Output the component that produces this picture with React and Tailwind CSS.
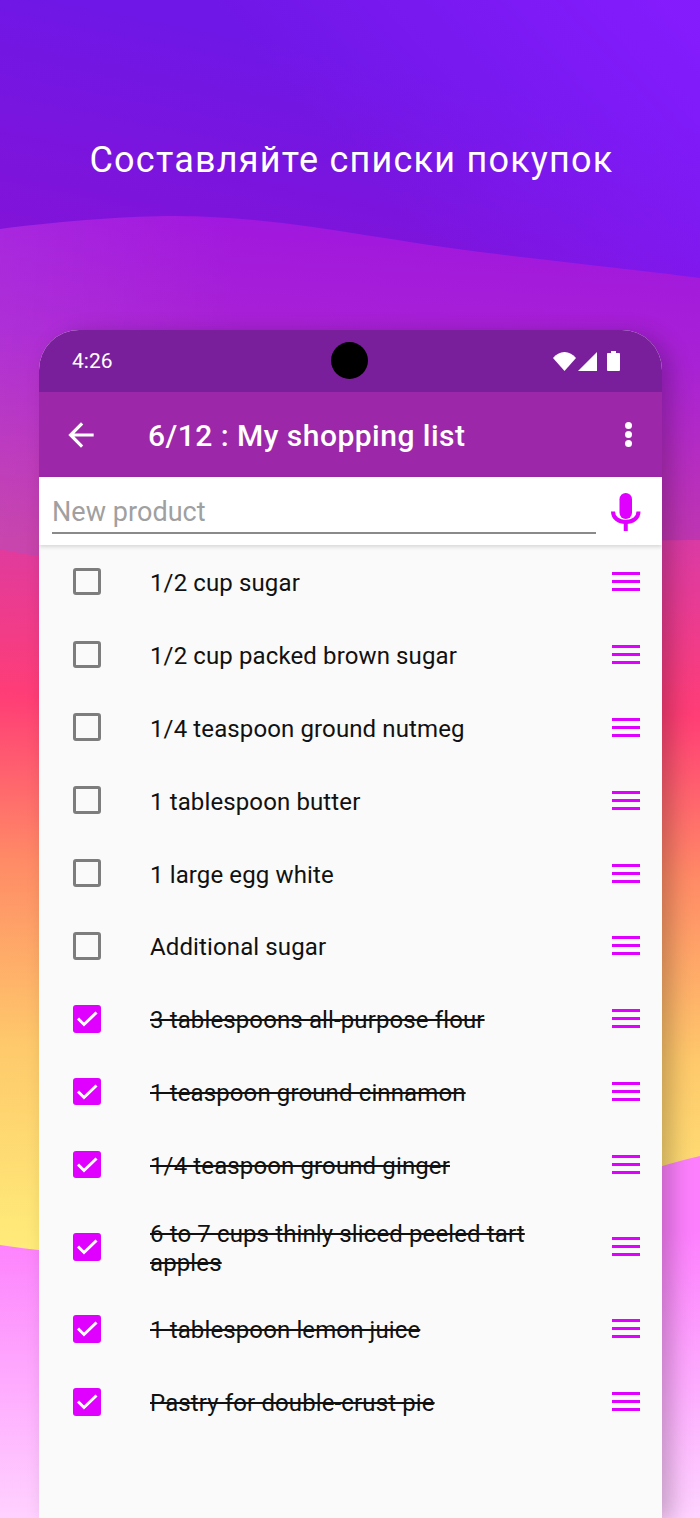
const ITEMS = [
  { label: '1/2 cup sugar', done: false },
  { label: '1/2 cup packed brown sugar', done: false },
  { label: '1/4 teaspoon ground nutmeg', done: false },
  { label: '1 tablespoon butter', done: false },
  { label: '1 large egg white', done: false },
  { label: 'Additional sugar', done: false },
  { label: '3 tablespoons all-purpose flour', done: true },
  { label: '1 teaspoon ground cinnamon', done: true },
  { label: '1/4 teaspoon ground ginger', done: true },
  { label: '6 to 7 cups thinly sliced peeled tart apples', done: true, tall: true },
  { label: '1 tablespoon lemon juice', done: true },
  { label: 'Pastry for double-crust pie', done: true },
];

function Backdrop() {
  return (
    <svg className="absolute inset-0" width="700" height="1518" viewBox="0 0 700 1518">
      <defs>
        <linearGradient id="top" gradientUnits="userSpaceOnUse" x1="60" y1="0" x2="0" y2="300">
          <stop offset="0" stopColor="#6f17e6" />
          <stop offset="1" stopColor="#8812d4" />
        </linearGradient>
        <linearGradient id="topRight" gradientUnits="userSpaceOnUse" x1="700" y1="40" x2="450" y2="270">
          <stop offset="0" stopColor="#861cff" stopOpacity="0.9" />
          <stop offset="1" stopColor="#861cff" stopOpacity="0" />
        </linearGradient>
        <linearGradient id="mid" gradientUnits="userSpaceOnUse" x1="400" y1="210" x2="380" y2="560">
          <stop offset="0" stopColor="#a016e0" />
          <stop offset="0.4" stopColor="#a922d4" />
          <stop offset="1" stopColor="#c43aa8" />
        </linearGradient>
        <linearGradient id="midLeft" gradientUnits="userSpaceOnUse" x1="0" y1="0" x2="240" y2="0">
          <stop offset="0" stopColor="#ffffff" stopOpacity="0.06" />
          <stop offset="1" stopColor="#ffffff" stopOpacity="0" />
        </linearGradient>
        <linearGradient id="warm" gradientUnits="userSpaceOnUse" x1="360" y1="520" x2="340" y2="1260">
          <stop offset="0" stopColor="#d83aa8" />
          <stop offset="0.25" stopColor="#ff3d76" />
          <stop offset="0.47" stopColor="#ff8a66" />
          <stop offset="0.72" stopColor="#fec96b" />
          <stop offset="1" stopColor="#ffec7a" />
        </linearGradient>
        <linearGradient id="pink" gradientUnits="userSpaceOnUse" x1="350" y1="1160" x2="350" y2="1518">
          <stop offset="0.2" stopColor="#fd7ffd" />
          <stop offset="1" stopColor="#ffd2ff" />
        </linearGradient>
      </defs>
      <rect width="700" height="1518" fill="url(#top)" />
      <rect width="700" height="300" fill="url(#topRight)" />
      <path d="M0 229 C70 220 130 216 175 216 C280 216 380 240 480 252 C560 262 640 270 700 278 L700 560 L0 560 Z" fill="url(#mid)" />
      <path d="M0 229 C70 220 130 216 175 216 L240 222 L240 560 L0 560 Z" fill="url(#midLeft)" />
      <path d="M0 549 C60 562 140 570 300 560 C460 550 600 540 700 540 L700 1300 L0 1300 Z" fill="url(#warm)" />
      <path d="M0 1245 C120 1262 250 1270 400 1240 C520 1215 620 1175 700 1156 L700 1518 L0 1518 Z" fill="url(#pink)" />
    </svg>
  );
}

function Checkbox({ checked }) {
  if (checked) {
    return (
      <div className="w-[27.5px] h-[27.5px] shrink-0 rounded-[3px] bg-[#df00ff]">
        <svg width="27.5" height="27.5" viewBox="0 0 27.5 27.5" fill="none">
          <path d="M5 13.5l6 6L23.5 7.5" stroke="#fff" strokeWidth="3" />
        </svg>
      </div>
    );
  }
  return <div className="w-[27.5px] h-[27.5px] shrink-0 rounded-[3px] border-[3px] border-[#7d7d7d]" />;
}

function DragHandle() {
  return (
    <div className="w-7 shrink-0 flex flex-col gap-[5px]">
      <div className="h-[3px] bg-[#df00ff]" />
      <div className="h-[3px] bg-[#df00ff]" />
      <div className="h-[3px] bg-[#df00ff]" />
    </div>
  );
}

export default function App() {
  return (
    <div className="relative w-[700px] h-[1518px] overflow-hidden" style={{ fontFamily: 'Roboto, sans-serif' }}>
      <Backdrop />

      <div className="relative flex flex-col h-full">
        <h1 className="mt-[138px] h-[44px] pl-[3px] text-center text-white text-[36px] leading-[44px] font-normal tracking-[0.034em]">
          Составляйте списки покупок
        </h1>

        <div className="mt-[148px] ml-[39px] w-[623px] flex-1 rounded-t-[40px] overflow-hidden bg-[#fafafa] shadow-[10px_4px_22px_rgba(0,0,0,0.22)] flex flex-col">
          {/* Status bar */}
          <div className="relative h-[62px] shrink-0 bg-[#7a1f9b] flex items-center justify-between pl-[33px] pr-[42px] text-white">
            <span className="text-[21px] leading-none mt-[1px]">4:26</span>
            <div className="absolute left-[292px] top-[12px] w-[37px] h-[37px] rounded-full bg-black" />
            <div className="flex items-center gap-[2px]">
              <svg width="23" height="19" viewBox="0 0 23 19">
                <path d="M0 6C3 2.5 7 0 11.5 0S20 2.5 23 6L11.5 19Z" fill="#fff" />
              </svg>
              <svg width="19" height="19" viewBox="0 0 19 19">
                <path d="M0 19L19 0V19Z" fill="#fff" />
              </svg>
              <svg className="ml-[8px]" width="13" height="20" viewBox="0 0 13 20">
                <path d="M4 0h5v2h3a1 1 0 0 1 1 1v16a1 1 0 0 1-1 1H1a1 1 0 0 1-1-1V3a1 1 0 0 1 1-1h3Z" fill="#fff" />
              </svg>
            </div>
          </div>

          {/* Toolbar */}
          <div className="h-[85px] shrink-0 bg-[#9c27a8] flex items-center text-white">
            <svg className="ml-[23px] shrink-0" width="38" height="38" viewBox="0 0 24 24" fill="#fff">
              <path d="M20 11H7.83l5.59-5.59L12 4l-8 8 8 8 1.41-1.41L7.83 13H20v-2z" />
            </svg>
            <span className="ml-[48px] flex-1 text-[30px] font-medium leading-none tracking-[0.016em] mt-[2px]">6/12 : My shopping list</span>
            <div className="mr-[30px] flex flex-col gap-[2px]">
              <div className="w-[7px] h-[7px] rounded-full bg-white" />
              <div className="w-[7px] h-[7px] rounded-full bg-white" />
              <div className="w-[7px] h-[7px] rounded-full bg-white" />
            </div>
          </div>

          {/* New product input */}
          <div className="relative z-10 h-[68px] shrink-0 bg-white shadow-[0_2px_4px_rgba(0,0,0,0.14)] flex items-start pl-[13px] pr-[21px]">
            <div className="w-[544px] h-[57px] border-b-2 border-[#8a8a8a] flex items-end pb-[3px]">
              <span className="text-[27px] leading-[34px] text-[#a0a0a0] tracking-[0.002em]">New product</span>
            </div>
            <svg className="ml-auto mt-[16px]" width="30" height="38" viewBox="0 0 30 38" fill="none">
              <rect x="8.5" y="0" width="12.5" height="26" rx="6.25" fill="#df00ff" />
              <path d="M2 18.5c0 6.5 5.5 10.5 12.75 10.5S27.5 25 27.5 18.5" stroke="#df00ff" strokeWidth="4" />
              <rect x="12.75" y="28" width="4" height="10" fill="#df00ff" />
            </svg>
          </div>

          {/* Items */}
          <div className="flex flex-col">
            {ITEMS.map((item) => (
              <div
                key={item.label}
                className={`flex items-center pl-[34px] pr-[22px] ${item.tall ? 'h-[91.5px]' : 'h-[72.9px]'}`}
              >
                <Checkbox checked={item.done} />
                <div className={`ml-[49.5px] w-[430px] ${item.tall ? 'mt-[4px]' : 'mt-[4px]'} text-[24px] leading-[29px] tracking-[0.005em] text-[#111] ${item.done ? 'line-through' : ''}`}>
                  {item.label}
                </div>
                <div className="ml-auto">
                  <DragHandle />
                </div>
              </div>
            ))}
          </div>
        </div>
      </div>
    </div>
  );
}
